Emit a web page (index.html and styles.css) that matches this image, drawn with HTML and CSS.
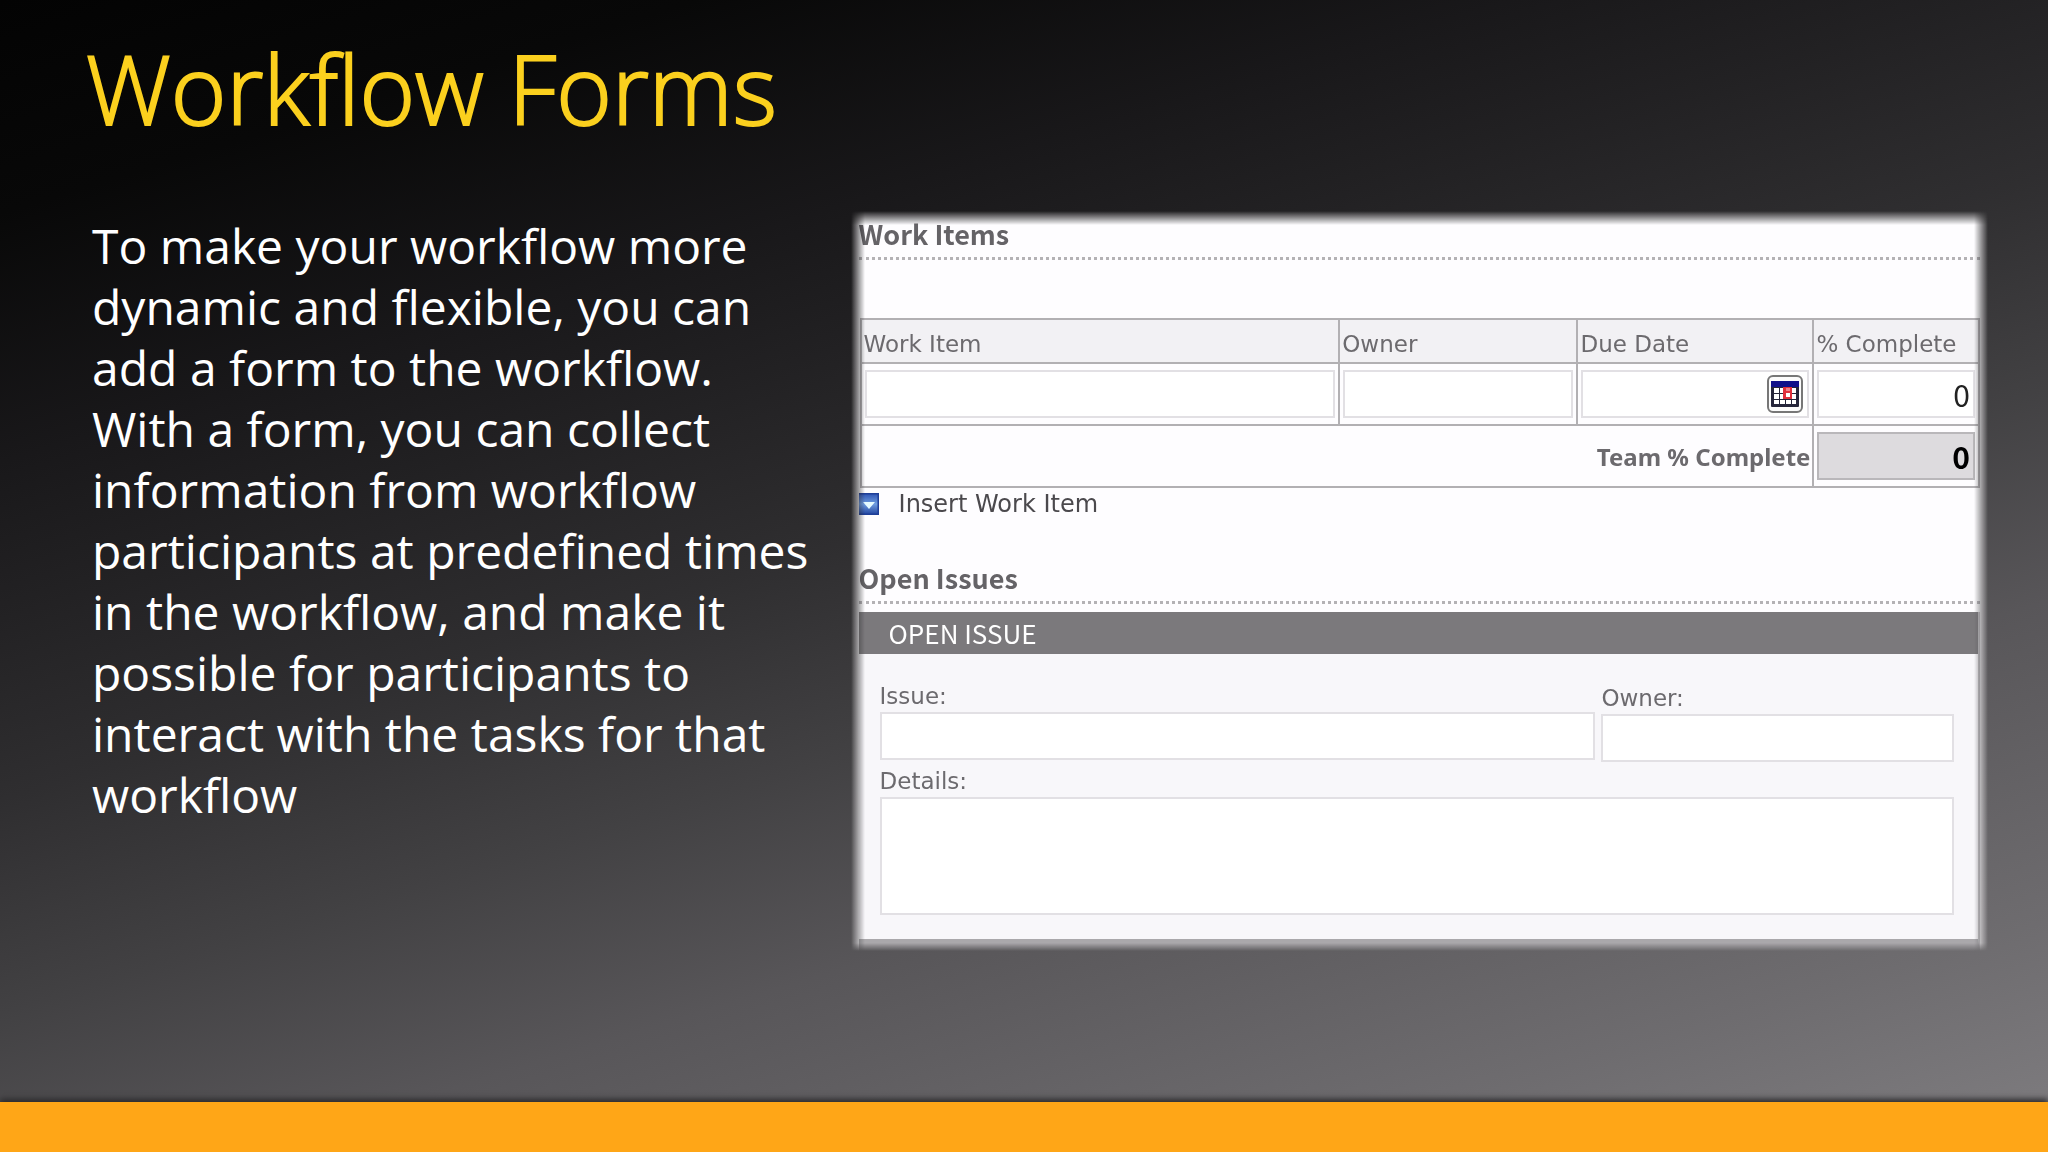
FILE: index.html
```html
<!DOCTYPE html>
<html lang="en">
<head>
<meta charset="utf-8">
<title>Workflow Forms</title>
<link rel="stylesheet" href="styles.css">
</head>
<body>
<main class="slide">
  <h1 class="slide-title">Workflow Forms</h1>
  <div class="slide-content">
    <p class="slide-text">To make your workflow more dynamic and flexible, you can add a form to the workflow. With a form, you can collect information from workflow participants at predefined times in the workflow, and make it possible for participants to interact with the tasks for that workflow</p>
    <form class="panel">
      <h2 class="section-title">Work Items</h2>
      <table class="items">
        <colgroup><col class="col-item"><col class="col-owner"><col class="col-date"><col class="col-pct"></colgroup>
        <thead>
          <tr><th id="h-item">Work Item</th><th id="h-owner">Owner</th><th id="h-date">Due Date</th><th id="h-pct">% Complete</th></tr>
        </thead>
        <tbody>
          <tr>
            <td><input class="field" type="text" aria-labelledby="h-item"></td>
            <td><input class="field" type="text" aria-labelledby="h-owner"></td>
            <td>
              <div class="date">
                <input class="date-input" type="text" aria-labelledby="h-date">
                <button class="date-button" type="button" aria-label="Pick a date">
                  <svg width="28" height="26" viewBox="0 0 28 26">
                    <rect x="0" y="0" width="28" height="26" rx="1" fill="#25253a"/>
                    <rect x="0" y="0" width="28" height="6" fill="#10108a"/>
                    <g fill="#fff">
                      <rect x="3" y="7" width="5" height="5"/><rect x="9" y="7" width="4" height="5"/><rect x="21" y="7" width="4" height="5"/>
                      <rect x="3" y="13" width="5" height="5"/><rect x="9" y="13" width="4" height="5"/><rect x="21" y="13" width="4" height="5"/>
                      <rect x="3" y="19" width="5" height="4"/><rect x="9" y="19" width="5" height="4"/><rect x="15" y="19" width="5" height="4"/><rect x="21" y="19" width="4" height="4"/>
                    </g>
                    <rect x="12" y="6" width="9" height="12" fill="#e0303c"/>
                    <rect x="15" y="7" width="4" height="3" fill="#f08088"/>
                    <rect x="15" y="12" width="4" height="4" fill="#fff"/>
                  </svg>
                </button>
              </div>
            </td>
            <td><input class="field number" type="text" value="0" aria-labelledby="h-pct"></td>
          </tr>
          <tr>
            <td class="total-label" colspan="3"><label for="total">Team % Complete</label></td>
            <td><input class="field number total" id="total" type="text" value="0" readonly></td>
          </tr>
        </tbody>
      </table>
      <button class="insert" type="button">
        <svg class="insert-icon" width="20" height="22" viewBox="0 0 20 22">
          <defs><linearGradient id="blue" x1="0" y1="0" x2="0" y2="1"><stop offset="0" stop-color="#2a4fb0"/><stop offset=".5" stop-color="#6f9de0"/><stop offset="1" stop-color="#1d3f9c"/></linearGradient></defs>
          <rect width="20" height="22" fill="url(#blue)"/>
          <path d="M0 0H20V22H0" fill="none" stroke="#1f3f98" stroke-width="3"/>
          <path d="M4 9H16L10 16Z" fill="#e6fbff"/>
        </svg>
        Insert Work Item
      </button>
      <h2 class="section-title">Open Issues</h2>
      <section class="issue">
        <h3 class="issue-title">OPEN ISSUE</h3>
        <div class="issue-body">
          <div class="issue-row">
            <div class="issue-name"><label for="issue">Issue:</label><input class="field" id="issue" type="text"></div>
            <div class="issue-owner"><label for="owner">Owner:</label><input class="field" id="owner" type="text"></div>
          </div>
          <label for="details">Details:</label>
          <textarea class="field details" id="details"></textarea>
        </div>
      </section>
    </form>
  </div>
  <footer class="slide-footer"></footer>
</main>
</body>
</html>
```
FILE: styles.css
```css
* { box-sizing: border-box; }

body {
  margin: 0;
  font-family: "DejaVu Sans", sans-serif;
}

.slide {
  display: flex;
  flex-direction: column;
  min-height: 100vh;
  background: linear-gradient(163deg, #030303 0%, #080808 12%, #19181a 26%, #222123 34%, #2f2e30 45%, #424143 57%, #585659 69%, #6e6c6f 87%, #807e81 100%);
}

.slide-title {
  margin: 0;
  padding: 18px 86px 0;
  color: #fbd01e;
  font: 300 95px/140px "Open Sans", sans-serif;
  -webkit-text-stroke: 2px #fbd01e;
}

.slide-content {
  display: grid;
  grid-template-columns: 38fr 59fr;
  gap: 26px;
  padding: 53px 60px 0 92px;
}

.slide-text {
  margin: 4px 0 0;
  color: #fff;
  font: 48px/61px "Open Sans", sans-serif;
}

.panel {
  padding: 8px 8px 0;
  background: #fefdff;
  color: #6c6a6e;
  font-size: 23px;
  line-height: 28px;
  mask-image:
    linear-gradient(to right, transparent, #000 14px, #000 calc(100% - 14px), transparent),
    linear-gradient(to bottom, transparent, #000 14px, #000 calc(100% - 8px), transparent);
  mask-composite: intersect;
}

.section-title {
  margin: 0;
  padding-bottom: 9px;
  border-bottom: 3px dotted #b4b2b5;
  color: #656367;
  font: bold 27px/29px "Noto Sans CJK SC", sans-serif;
}

.items {
  width: calc(100% - 1px);
  margin: 58px 0 0 1px;
  border-collapse: collapse;
  table-layout: fixed;
}

.col-item { width: 42.8%; }
.col-owner { width: 21.3%; }
.col-date { width: 21.1%; }
.col-pct { width: 14.8%; }

.items th,
.items td {
  height: 62px;
  padding: 0 3px;
  border: 2px solid #b2b0b3;
}

.items th {
  height: 44px;
  padding: 6px 2px 0;
  background: #f2f1f4;
  font-weight: normal;
  text-align: left;
}

.field {
  display: block;
  width: 100%;
  height: 48px;
  padding: 0 3px;
  border: 2px solid #e2e0e4;
  background: #fff;
  color: #222;
  font: 30px/36px "Noto Sans CJK SC", sans-serif;
}

.number { text-align: right; }

.total {
  border-color: #b9b7ba;
  background: #dddbde;
  color: #000;
  font-weight: bold;
}

.items .total-label {
  padding: 2px 2px 0;
  font: bold 24px/28px "Noto Sans", sans-serif;
  text-align: right;
}

.date {
  display: flex;
  align-items: center;
  height: 48px;
  padding-right: 4px;
  border: 2px solid #e2e0e4;
  background: #fff;
}

.date-input {
  flex: 1;
  min-width: 0;
  height: 40px;
  border: 0;
  background: none;
}

.date-button {
  display: flex;
  align-items: center;
  justify-content: center;
  width: 36px;
  height: 38px;
  padding: 0;
  border: 2px solid #777;
  border-radius: 6px;
  background: #fbfbfb;
}

.insert {
  display: flex;
  align-items: center;
  gap: 20px;
  height: 32px;
  margin: 0 0 43px;
  padding: 0;
  border: 0;
  background: none;
  color: #4b494d;
  font: 24px/28px "DejaVu Sans", sans-serif;
}

.issue {
  margin-top: 8px;
  border-right: 2px solid #c4c2c6;
  border-bottom: 12px solid #aaa8ab;
  background: #f8f7fa;
}

.issue-title {
  margin: 0;
  padding: 0 30px;
  background: #7b797c;
  color: #fff;
  font: 26px/42px "Noto Sans CJK SC", sans-serif;
}

.issue-body { padding: 28px 24px 24px 21px; }

.issue-body label {
  display: block;
  height: 30px;
}

.issue-row {
  display: flex;
  gap: 6px;
  height: 85px;
}

.issue-name { flex: 67; }

.issue-owner {
  flex: 33;
  padding-top: 2px;
}

.details {
  height: 118px;
  resize: none;
}

.slide-footer {
  height: 50px;
  margin-top: auto;
  background: #ffa617;
  box-shadow: 0 -3px 6px #2b2a2c;
}
```
